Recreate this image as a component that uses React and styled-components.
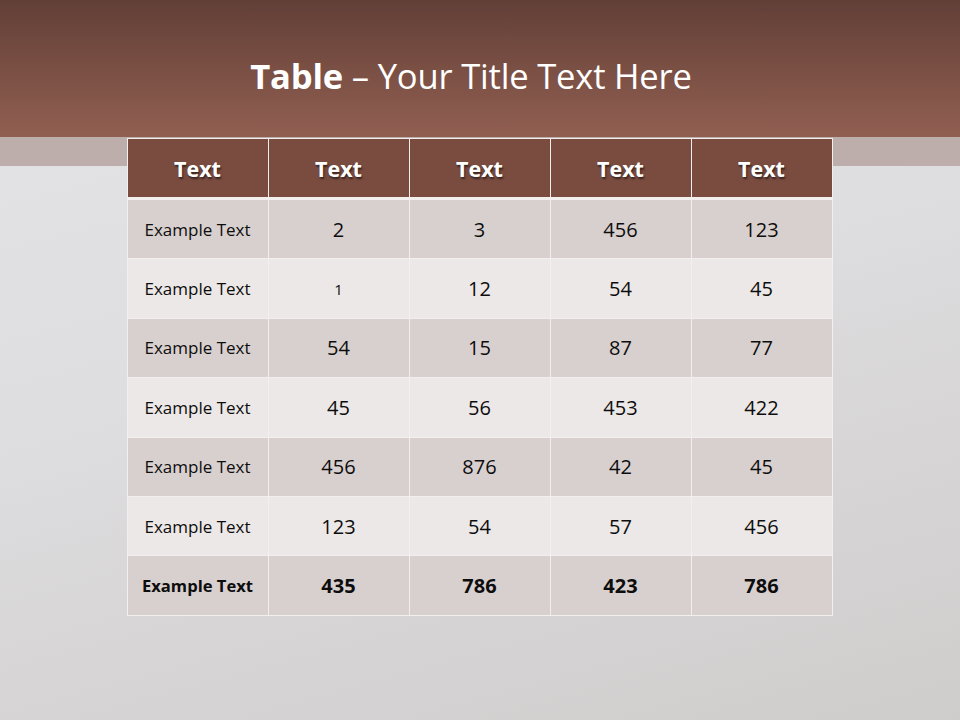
import React from "react";
import styled, { createGlobalStyle } from "styled-components";

const Global = createGlobalStyle`
  html, body { margin: 0; padding: 0; }
  body { width: 960px; height: 720px; overflow: hidden; font-family: "Open Sans", "Liberation Sans", sans-serif; }
  #root { width: 960px; height: 720px; }
`;

const Slide = styled.div`
  width: 960px;
  height: 720px;
  display: flex;
  flex-direction: column;
  background: linear-gradient(165deg, #e4e3e5 0%, #dedddf 45%, #cfcdcc 100%);
`;

const Header = styled.header`
  height: 137px;
  flex: none;
  display: flex;
  align-items: center;
  justify-content: center;
  padding-top: 14px;
  box-sizing: border-box;
  background: linear-gradient(180deg, #613f37 0%, #7a4f44 50%, #915f52 100%);
`;

const Title = styled.h1`
  margin: 0;
  margin-left: -18px;
  font-family: "Open Sans", "Liberation Sans", sans-serif;
  font-weight: 400;
  font-size: 34.6px;
  color: #ffffff;
  letter-spacing: -0.2px;
  b { font-weight: 700; }
`;

const Main = styled.main`
  flex: 1;
  display: flex;
  justify-content: center;
  padding-top: 1px;
  background: linear-gradient(180deg, #bdaeac 0, #bdaeac 29px, transparent 29px);
`;

const Table = styled.div`
  width: 706px;
  align-self: flex-start;
  margin-left: -1px;
  display: flex;
  flex-direction: column;
  gap: 3px;
  padding: 1px;
  box-sizing: border-box;
  background: #f3efee;
`;

const HeadRow = styled.div`
  display: grid;
  grid-template-columns: repeat(5, 140px);
  column-gap: 1px;
  height: 58px;
`;

const HeadCell = styled.div`
  background: #7a4c40;
  display: flex;
  align-items: center;
  justify-content: center;
  color: #ffffff;
  font-weight: 700;
  font-size: 21.5px;
  text-shadow: 1px 2px 2px rgba(0, 0, 0, 0.55);
`;

const Body = styled.div`
  display: grid;
  grid-template-columns: repeat(5, 140px);
  grid-auto-rows: 58.4px;
  gap: 1px;
`;

const Cell = styled.div`
  background: ${(p) => (p.$odd ? "#d8d0cf" : "#ece8e7")};
  display: flex;
  align-items: center;
  justify-content: center;
  color: #0d0d0d;
  font-weight: ${(p) => (p.$bold ? 700 : 400)};
  font-size: ${(p) => (p.$label ? (p.$bold ? "16.6px" : "17px") : p.$small ? "15px" : "20px")};
`;

const rows = [
  ["2", "3", "456", "123"],
  ["1", "12", "54", "45"],
  ["54", "15", "87", "77"],
  ["45", "56", "453", "422"],
  ["456", "876", "42", "45"],
  ["123", "54", "57", "456"],
  ["435", "786", "423", "786"],
];

export default function App() {
  return (
    <>
      <Global />
      <Slide>
        <Header>
          <Title>
            <b>Table</b> – Your Title Text Here
          </Title>
        </Header>
        <Main>
          <Table>
            <HeadRow>
              {Array.from({ length: 5 }).map((_, i) => (
                <HeadCell key={i}>Text</HeadCell>
              ))}
            </HeadRow>
            <Body>
              {rows.map((r, ri) => {
                const odd = ri % 2 === 0;
                const bold = ri === rows.length - 1;
                return (
                  <React.Fragment key={ri}>
                    <Cell $odd={odd} $bold={bold} $label>
                      Example Text
                    </Cell>
                    {r.map((v, ci) => (
                      <Cell key={ci} $odd={odd} $bold={bold} $small={ri === 1 && ci === 0}>
                        {v}
                      </Cell>
                    ))}
                  </React.Fragment>
                );
              })}
            </Body>
          </Table>
        </Main>
      </Slide>
    </>
  );
}
